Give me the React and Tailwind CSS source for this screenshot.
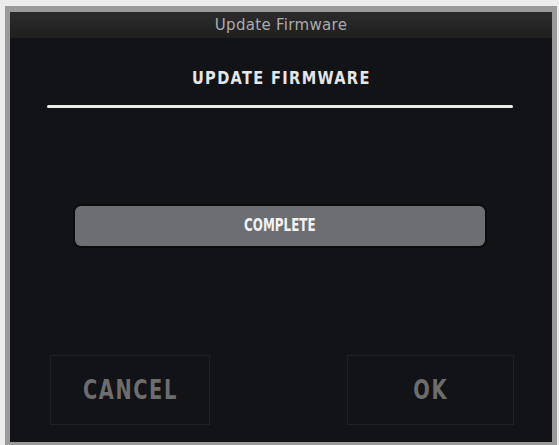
export default function App() {
  const cond = { fontFamily: '"DejaVu Sans Condensed", "DejaVu Sans", sans-serif' }

  return (
    <div className="w-[559px] h-[445px] bg-[#ececec] pt-[6px] pl-[5px] pr-[2px] overflow-hidden">
      <div className="h-full flex flex-col border-x-[5px] border-t-[6px] border-b-[3px] border-[#9a9a9a]">
        {/* title bar */}
        <div className="h-[26px] bg-gradient-to-b from-[#2c2c2c] to-[#1f1f1f] flex items-center justify-center">
          <span className="text-[15px] tracking-[0.3px] text-[#ababab] font-['DejaVu_Sans',sans-serif]">Update Firmware</span>
        </div>

        <div className="flex-1 bg-[#121316] flex flex-col">
          <div className="pt-[26px] text-center">
            <span style={cond} className="inline-block text-[18px] font-bold tracking-[1.5px] text-[#e6e6e6] scale-x-[0.9]">UPDATE FIRMWARE</span>
          </div>
          <div className="mt-[14px] ml-[37px] mr-[39px] h-[3px] bg-[#e9e9e9] rounded-sm" />

          <div className="mt-[96px] ml-[63px] mr-[65px] p-[2px] rounded-[8px] bg-[#0b0b0c]">
            <div className="h-[40px] rounded-[6px] bg-[#6c6e71] flex items-center justify-center">
              <span style={cond} className="inline-block text-[17px] font-bold text-[#f2f2f2] scale-x-[0.78]">COMPLETE</span>
            </div>
          </div>

          <div className="mt-auto mb-[17px] flex justify-between ml-[40px] mr-[38px]">
            <button className="w-[160px] h-[70px] border border-[#1f2023] flex items-center justify-center">
              <span style={cond} className="inline-block text-[27px] font-bold tracking-[2px] text-[#6d6d6d] scale-x-[0.8]">CANCEL</span>
            </button>
            <button className="w-[167px] h-[70px] border border-[#1f2023] flex items-center justify-center">
              <span style={cond} className="inline-block text-[27px] font-bold tracking-[2px] text-[#6d6d6d] scale-x-[0.8]">OK</span>
            </button>
          </div>
        </div>
      </div>
    </div>
  )
}
